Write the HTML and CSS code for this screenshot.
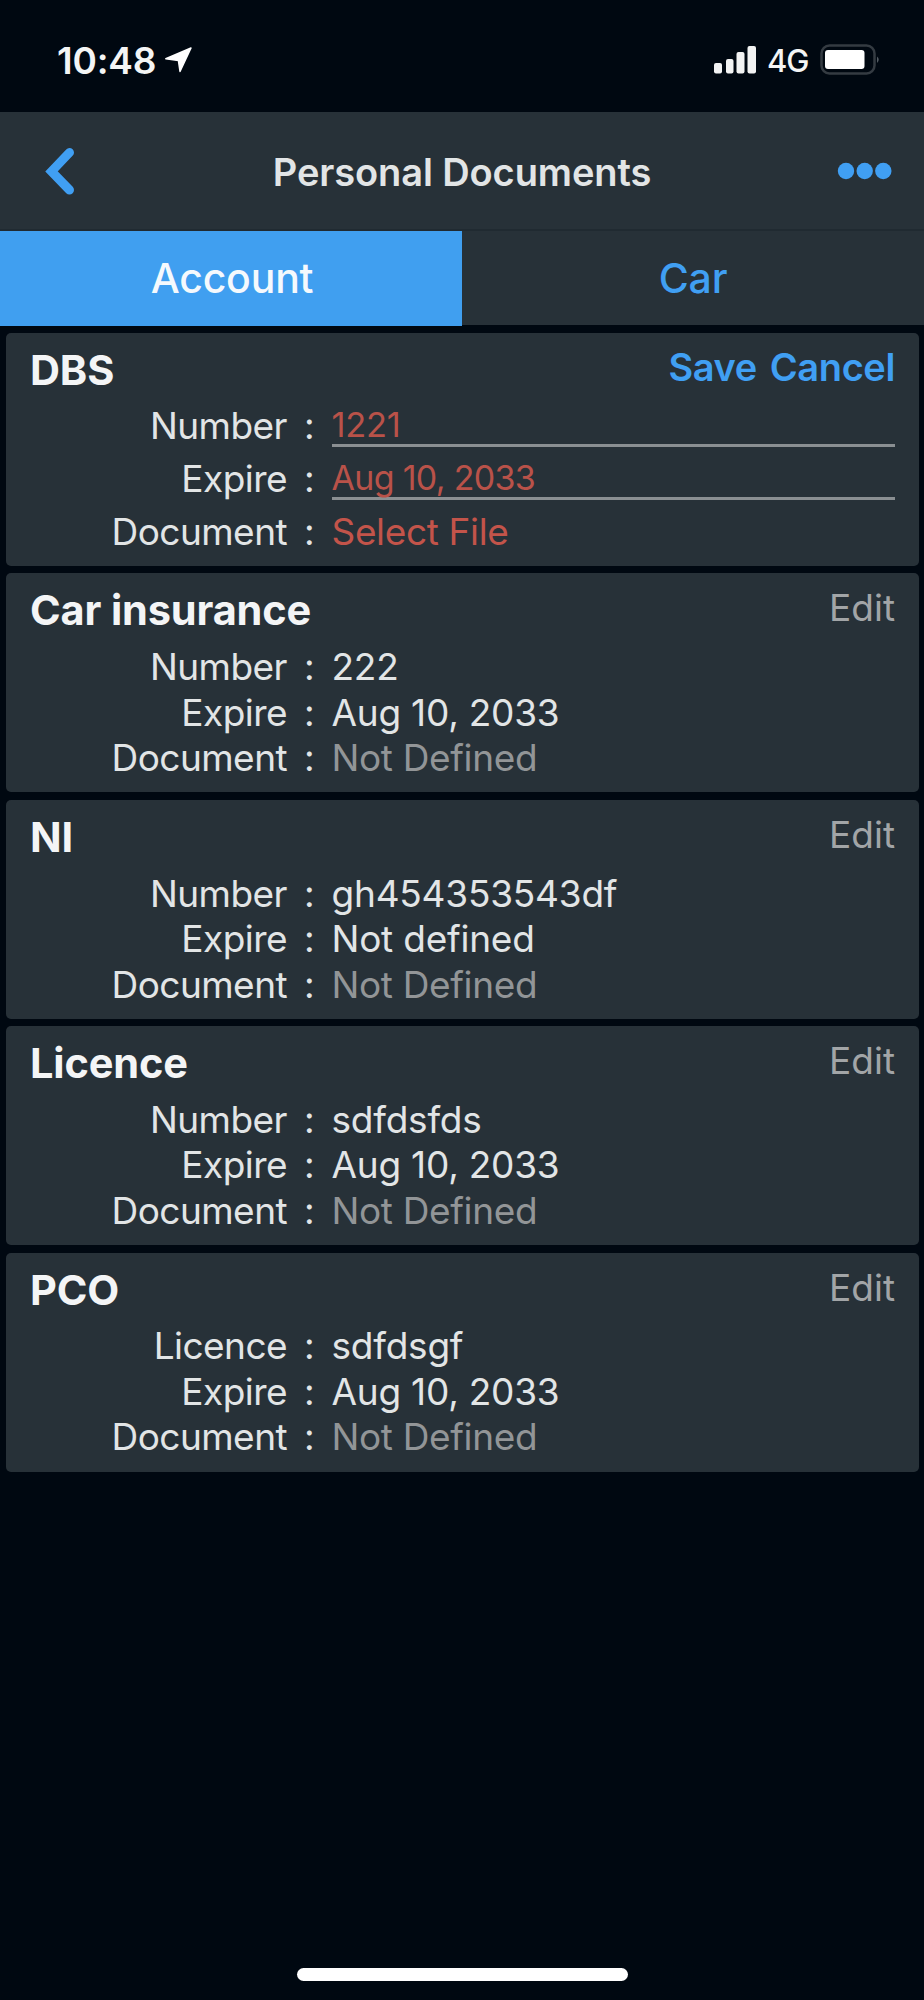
FILE: index.html
```html
<!DOCTYPE html>
<html lang="en">
<head>
<meta charset="utf-8">
<title>Personal Documents</title>
<link rel="stylesheet" href="styles.css">
</head>
<body>
<div class="screen">
  <div class="status">
    <div class="status-left">
      <span class="time">10:48</span>
      <svg class="location" width="28" height="26" viewBox="0 0 28 26"><path d="M26 1 15 24.500 13.400 13.500.8 11.800Z" fill="#fff" stroke="#fff" stroke-width="1.500" stroke-linejoin="round"/></svg>
    </div>
    <div class="status-right">
      <svg class="signal" width="44" height="28" viewBox="0 0 44 28" fill="#f2f3f3"><rect x="1" y="17" width="8" height="10.500" rx="2"/><rect x="13" y="13" width="7.500" height="14.500" rx="2"/><rect x="23.500" y="6" width="8" height="21.500" rx="2"/><rect x="34.500" y="0" width="8.500" height="27.500" rx="2"/></svg>
      <span class="network">4G</span>
      <svg class="battery" width="62" height="32" viewBox="0 0 62 32"><rect x="1.500" y="1.500" width="53" height="28" rx="8" fill="none" stroke="#343b42" stroke-width="2.500"/><rect x="5" y="6" width="39.500" height="19" rx="3" fill="#fff"/><path d="M57 12.500q3.500 3.200 0 6.500Z" fill="#545c63"/></svg>
    </div>
  </div>
  <header class="header">
    <svg class="back" width="32" height="48" viewBox="0 0 32 48"><path d="M25.500 5.500 7.500 24.500 25.500 43" fill="none" stroke="#409ff3" stroke-width="9" stroke-linecap="round" stroke-linejoin="miter"/></svg>
    <h1 class="title">Personal Documents</h1>
    <svg class="more" width="56" height="18" viewBox="0 0 56 18" fill="#409ff3"><circle cx="9" cy="9" r="8.200"/><circle cx="27.700" cy="9" r="8.200"/><circle cx="46.300" cy="9" r="8.200"/></svg>
  </header>
  <nav class="tabs">
    <div class="tab active">Account</div>
    <div class="tab">Car</div>
  </nav>
  <main class="cards">
    <section class="card editing">
      <div class="card-head"><h2>DBS</h2><div class="actions"><span class="save">Save</span><span class="cancel">Cancel</span></div></div>
      <div class="row"><span class="label">Number</span><span class="colon">:</span><span class="field">1221</span></div>
      <div class="row"><span class="label">Expire</span><span class="colon">:</span><span class="field date">Aug 10, 2033</span></div>
      <div class="row"><span class="label">Document</span><span class="colon">:</span><span class="value select">Select File</span></div>
    </section>
    <section class="card">
      <div class="card-head"><h2>Car insurance</h2><span class="edit">Edit</span></div>
      <div class="row"><span class="label">Number</span><span class="colon">:</span><span class="value">222</span></div>
      <div class="row"><span class="label">Expire</span><span class="colon">:</span><span class="value">Aug 10, 2033</span></div>
      <div class="row"><span class="label">Document</span><span class="colon">:</span><span class="value muted">Not Defined</span></div>
    </section>
    <section class="card">
      <div class="card-head"><h2>NI</h2><span class="edit">Edit</span></div>
      <div class="row"><span class="label">Number</span><span class="colon">:</span><span class="value">gh454353543df</span></div>
      <div class="row"><span class="label">Expire</span><span class="colon">:</span><span class="value">Not defined</span></div>
      <div class="row"><span class="label">Document</span><span class="colon">:</span><span class="value muted">Not Defined</span></div>
    </section>
    <section class="card">
      <div class="card-head"><h2>Licence</h2><span class="edit">Edit</span></div>
      <div class="row"><span class="label">Number</span><span class="colon">:</span><span class="value">sdfdsfds</span></div>
      <div class="row"><span class="label">Expire</span><span class="colon">:</span><span class="value">Aug 10, 2033</span></div>
      <div class="row"><span class="label">Document</span><span class="colon">:</span><span class="value muted">Not Defined</span></div>
    </section>
    <section class="card">
      <div class="card-head"><h2>PCO</h2><span class="edit">Edit</span></div>
      <div class="row"><span class="label">Licence</span><span class="colon">:</span><span class="value">sdfdsgf</span></div>
      <div class="row"><span class="label">Expire</span><span class="colon">:</span><span class="value">Aug 10, 2033</span></div>
      <div class="row"><span class="label">Document</span><span class="colon">:</span><span class="value muted">Not Defined</span></div>
    </section>
  </main>
  <div class="home"></div>
</div>
</body>
</html>
```

FILE: styles.css
```css
* { box-sizing: border-box; }
body { margin: 0; background: #000811; }
.screen {
  display: flex; flex-direction: column;
  width: 924px; height: 2000px; overflow: hidden;
  background: #000811; color: #e2e5e6;
  font-family: Inter, Roboto, "Liberation Sans", sans-serif;
  font-size: 37px; white-space: nowrap;
}
.status {
  display: flex; justify-content: space-between; height: 112px;
  padding: 38px 42px 0 57px; color: #f4f5f5;
}
.status-left, .status-right { display: flex; align-items: flex-start; }
.time { width: 108px; font-size: 37px; line-height: 45px; font-weight: 600; letter-spacing: -0.2px; }
.location { margin-top: 9px; }
.signal { margin: 8px 10px 0 0; }
.network { width: 53px; font-size: 31px; line-height: 46px; font-weight: 500; letter-spacing: -1px; }
.battery { margin-top: 6px; }
.header {
  display: flex; align-items: center; justify-content: space-between;
  height: 119px; padding: 1px 31px 0 44px;
  background: #273138; border-bottom: 2px solid #202a31;
}
.title { margin: 1px 0 0 11px; font-size: 38px; line-height: 46px; font-weight: 600; letter-spacing: -0.1px; }
.tabs { display: grid; grid-template-columns: 462px 1fr; height: 94px; background: #273138; }
.tab { text-align: center; font-size: 41px; line-height: 95px; font-weight: 550; letter-spacing: -0.2px; color: #409ff3; }
.tab.active { padding-left: 2px; background: #409ff0; color: #f5f9fd; }
.cards { display: flex; flex-direction: column; gap: 7.400px; padding: 7.500px 5px 0 5.500px; }
.card { height: 219px; padding: 12px 24px 0 24.500px; border-radius: 5px; background: #273138; }
.card.editing { height: 233.500px; }
.card-head { display: flex; justify-content: space-between; height: 58.800px; }
.editing .card-head { height: 54.300px; }
h2 { margin: 0; font-size: 41.500px; line-height: 50px; font-weight: 700; letter-spacing: -0.15px; color: #f4f5f6; }
.actions { display: flex; gap: 13px; font-size: 38px; line-height: 45px; font-weight: 600; letter-spacing: -0.4px; color: #409ff3; }
.edit { line-height: 46px; color: #a2a5a7; }
.row { display: grid; grid-template-columns: 257px 44.500px 1fr; line-height: 45.500px; }
.editing .row { height: 53px; line-height: 53px; }
.label { text-align: right; letter-spacing: -0.55px; }
.colon { text-align: center; }
.value { letter-spacing: -0.22px; }
.muted { letter-spacing: -0.35px; color: #929597; }
.field { height: 48.500px; border-bottom: 3px solid #8a8f92; font-size: 34.500px; line-height: 52px; letter-spacing: -0.3px; color: #b95249; }
.date { font-size: 34px; letter-spacing: -0.7px; }
.select { letter-spacing: -0.35px; color: #c3544a; }
.home { align-self: center; width: 331px; height: 13px; margin-top: auto; margin-bottom: 19px; border-radius: 7px; background: #fff; }
```
